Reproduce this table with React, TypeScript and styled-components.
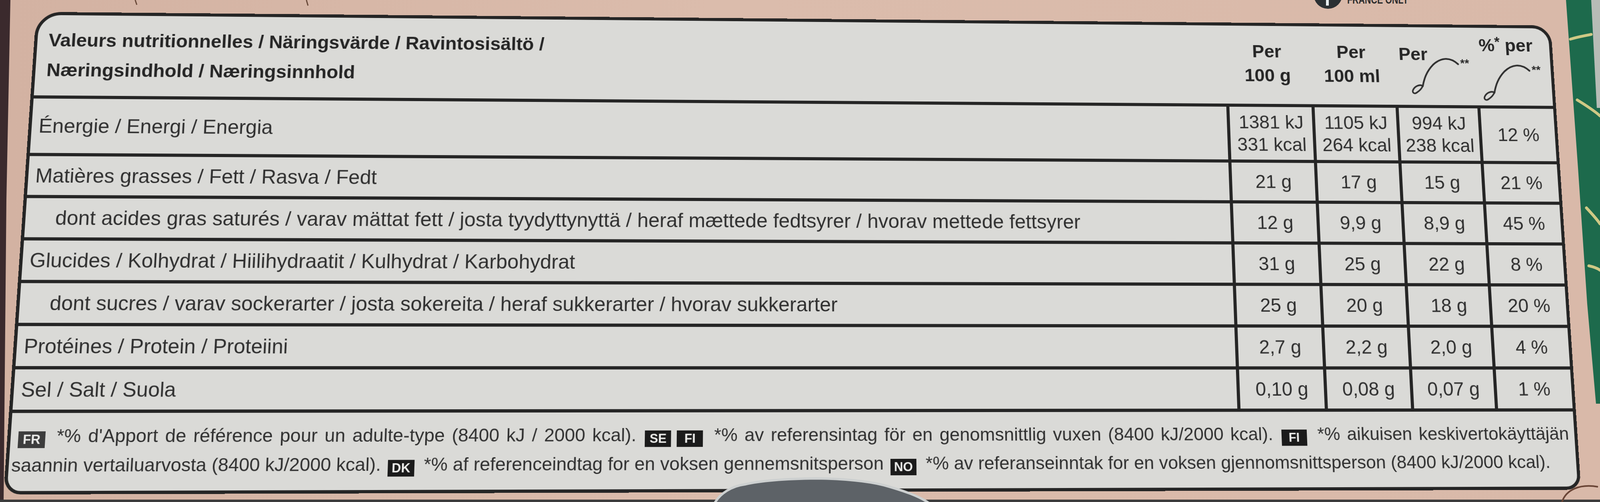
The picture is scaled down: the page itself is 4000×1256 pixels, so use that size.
import React from 'react'
import styled, { createGlobalStyle } from 'styled-components'

const INK = '#303030'
const LINE = '#252525'
const RULE = 8
const COLS = '1fr 221px 219px 214px 199px'

const GlobalStyle = createGlobalStyle`
  html, body { margin: 0; padding: 0; }
  body {
    width: 4000px;
    height: 1256px;
    overflow: hidden;
    background: #d8b8a7;
    font-family: 'Liberation Sans', Arial, sans-serif;
  }
`

type Nutrient = {
  label: string
  indent?: boolean
  values: string[][]
  pct: string
  h: number
}

const ROWS: Nutrient[] = [
  {
    label: 'Énergie / Energi / Energia',
    values: [
      ['1381 kJ', '331 kcal'],
      ['1105 kJ', '264 kcal'],
      ['994 kJ', '238 kcal'],
    ],
    pct: '12 %',
    h: 145,
  },
  { label: 'Matières grasses / Fett / Rasva / Fedt', values: [['21 g'], ['17 g'], ['15 g']], pct: '21 %', h: 105 },
  {
    label:
      'dont acides gras saturés / varav mättat fett / josta tyydyttynyttä / heraf mættede fedtsyrer / hvorav mettede fettsyrer',
    indent: true,
    values: [['12 g'], ['9,9 g'], ['8,9 g']],
    pct: '45 %',
    h: 105,
  },
  {
    label: 'Glucides / Kolhydrat / Hiilihydraatit / Kulhydrat / Karbohydrat',
    values: [['31 g'], ['25 g'], ['22 g']],
    pct: '8 %',
    h: 105,
  },
  {
    label: 'dont sucres / varav sockerarter / josta sokereita / heraf sukkerarter / hvorav sukkerarter',
    indent: true,
    values: [['25 g'], ['20 g'], ['18 g']],
    pct: '20 %',
    h: 105,
  },
  { label: 'Protéines / Protein / Proteiini', values: [['2,7 g'], ['2,2 g'], ['2,0 g']], pct: '4 %', h: 105 },
  { label: 'Sel / Salt / Suola', values: [['0,10 g'], ['0,08 g'], ['0,07 g']], pct: '1 %', h: 105 },
]

const Page = styled.div`
  position: relative;
  width: 4000px;
  height: 1256px;
  overflow: hidden;
  box-sizing: border-box;
  padding: 32px 0 0 88px;
  background: linear-gradient(90deg, #d3b2a2 0%, #dbbcac 45%, #d9b9a9 100%);
`

const BackdropSvg = styled.svg`
  position: absolute;
  left: 0;
  top: 0;
  z-index: 0;
`

const ThumbSvg = styled.svg`
  position: absolute;
  left: 1760px;
  top: 1176px;
  z-index: 2;
`

const Label = styled.section`
  position: relative;
  z-index: 1;
  width: 3864px;
  height: 1190px;
  box-sizing: border-box;
  display: flex;
  flex-direction: column;
  overflow: hidden;
  border: ${RULE}px solid ${LINE};
  border-radius: 62px 50px 36px 40px;
  background: #dadad7;
  color: ${INK};
  transform: perspective(3000px) rotateX(5.9deg) rotateY(1.75deg);
`

const Header = styled.div`
  display: grid;
  grid-template-columns: ${COLS};
  height: 205px;
  flex: none;
`

const Title = styled.h1`
  margin: 0;
  padding: 26px 0 0 27px;
  font-size: 47px;
  line-height: 76px;
  font-weight: 700;
  color: #262626;
`

const HeadText = styled.span`
  font-size: 47px;
  line-height: 63px;
  font-weight: 700;
  color: #262626;
  white-space: nowrap;
`

const PerHead = styled.div`
  display: flex;
  flex-direction: column;
  align-items: center;
  padding-top: 35px;
`

const PortionHead = styled.div`
  display: flex;
  align-items: flex-start;
  padding: 39px 0 0 15px;
`

const PctHead = styled.div`
  display: flex;
  flex-direction: column;
  align-items: flex-start;
  padding: 6px 0 0 13px;
`

const Sup = styled.span`
  font-size: 36px;
  vertical-align: 12px;
`

const SpoonGroup = styled.div<{ $dx: number; $dy: number }>`
  display: flex;
  align-items: flex-start;
  margin-left: ${(p) => p.$dx}px;
  margin-top: ${(p) => p.$dy}px;
`

const Stars = styled.span`
  font-size: 30px;
  line-height: 30px;
  font-weight: 700;
  color: #2a2a2a;
  margin: 2px 0 0 2px;
`

const Row = styled.div<{ $h: number }>`
  display: grid;
  grid-template-columns: ${COLS};
  height: ${(p) => p.$h}px;
  flex: none;
  box-sizing: border-box;
  border-top: ${RULE}px solid ${LINE};
`

const Name = styled.div<{ $indent?: boolean }>`
  display: flex;
  align-items: center;
  padding-left: ${(p) => (p.$indent ? 72 : 17)}px;
  font-size: 50px;
  white-space: nowrap;
`

const Value = styled.div`
  display: flex;
  flex-direction: column;
  align-items: center;
  justify-content: center;
  border-left: ${RULE}px solid ${LINE};
  font-size: 48px;
  line-height: 58px;
  white-space: nowrap;
`

const Footer = styled.footer`
  flex: 1;
  box-sizing: border-box;
  border-top: ${RULE}px solid ${LINE};
  padding: 20px 14px 0 6px;
  font-size: 45px;
  line-height: 70px;
`

const FootLine = styled.div<{ $fill?: boolean }>`
  text-align: left;
  text-align-last: ${(p) => (p.$fill ? 'justify' : 'left')};
  white-space: ${(p) => (p.$fill ? 'normal' : 'nowrap')};
`

const Badge = styled.span<{ $soft?: boolean; $lead?: boolean }>`
  display: inline-block;
  min-width: 64px;
  height: 40px;
  box-sizing: border-box;
  padding: 0 9px;
  margin: 0 10px 0 ${(p) => (p.$lead ? 12 : 4)}px;
  vertical-align: -4px;
  text-align: center;
  text-align-last: center;
  background: ${(p) => (p.$soft ? '#3d3d3d' : '#1b1b1b')};
  color: #ececea;
  font-size: 31px;
  line-height: 40px;
  font-weight: 700;
`

const Spoon: React.FC = () => (
  <svg width={130} height={100} viewBox="0 0 130 100" fill="none" stroke="#2e2e2e" strokeLinecap="round">
    <path d="M30 79 C35 58 42 40 60 22 C80 4 104 -1 126 20" strokeWidth={4.5} />
    <path d="M30 78 C22 73 9 79 4 89 C1 96 7 100 13 96 C21 91 27 85 30 78 Z" strokeWidth={4} />
  </svg>
)

const Backdrop: React.FC = () => (
  <BackdropSvg width={4000} height={1256} viewBox="0 0 4000 1256">
    <polygon points="0,0 26,0 16,500 9,1256 0,1256" fill="#3b2a2d" />
    <polygon points="3915,0 4000,0 4000,1010 3990,1010 3968,760 3945,420" fill="#1d6a4c" />
    <polygon points="3978,0 4000,0 4000,270 3992,270" fill="#b7bcb6" />
    <g stroke="#cfc985" strokeWidth={7} fill="none" strokeLinecap="round">
      <path d="M3926 98 C3945 92 3960 90 3978 86" />
      <path d="M3943 250 C3962 262 3985 276 4000 290" />
      <path d="M3966 520 C3980 535 3992 548 4000 560" />
      <path d="M3972 665 C3985 668 3995 672 4000 676" />
    </g>
    <circle cx={3320} cy={-14} r={36} fill="#2b3033" />
    <rect x={3315} y={0} width={7} height={14} fill="#e8eef0" />
    <text
      x={3368}
      y={9}
      fontFamily="Liberation Sans, sans-serif"
      fontWeight={700}
      fontSize={30}
      fill="#2c2c2c"
      textLength={153}
      lengthAdjust="spacingAndGlyphs"
    >
      FRANCE ONLY
    </text>
    <g stroke="#6a4a3a" strokeWidth={3} fill="none">
      <path d="M338 0 L342 12" />
      <path d="M766 0 L770 14" />
    </g>
    <rect x={0} y={1250} width={4000} height={6} fill="#3c3c3c" />
    <path d="M3905 1256 C3915 1225 3950 1210 3995 1218" stroke="#6a4536" strokeWidth={4} fill="none" />
  </BackdropSvg>
)

const Thumb: React.FC = () => (
  <ThumbSvg width={600} height={80} viewBox="1760 1176 600 80">
    <path
      d="M1786 1260 C1800 1234 1830 1216 1862 1212 C1900 1203 1960 1198 2041 1197 C2120 1198 2170 1204 2210 1214 C2260 1228 2300 1242 2324 1260 Z"
      fill="#5d6267"
      stroke="#cdd0d0"
      strokeWidth={6}
    />
  </ThumbSvg>
)

export default function App() {
  return (
    <>
      <GlobalStyle />
      <Page>
        <Backdrop />
        <Label>
          <Header>
            <Title>
              Valeurs nutritionnelles / Näringsvärde / Ravintosisältö /
              <br />
              Næringsindhold / Næringsinnhold
            </Title>
            <PerHead>
              <HeadText>Per</HeadText>
              <HeadText>100 g</HeadText>
            </PerHead>
            <PerHead>
              <HeadText>Per</HeadText>
              <HeadText>100 ml</HeadText>
            </PerHead>
            <PortionHead>
              <HeadText>Per</HeadText>
              <SpoonGroup $dx={-47} $dy={38}>
                <Spoon />
                <Stars>**</Stars>
              </SpoonGroup>
            </PortionHead>
            <PctHead>
              <HeadText>
                %<Sup>*</Sup> per
              </HeadText>
              <SpoonGroup $dx={4} $dy={16}>
                <Spoon />
                <Stars>**</Stars>
              </SpoonGroup>
            </PctHead>
          </Header>
          {ROWS.map((r) => (
            <Row key={r.label} $h={r.h}>
              <Name $indent={r.indent}>{r.label}</Name>
              {r.values.map((v, i) => (
                <Value key={i}>
                  {v.map((line) => (
                    <span key={line}>{line}</span>
                  ))}
                </Value>
              ))}
              <Value>{r.pct}</Value>
            </Row>
          ))}
          <Footer>
            <FootLine $fill>
              <Badge $soft $lead>
                FR
              </Badge>{' '}
              *% d'Apport de référence pour un adulte-type (8400 kJ / 2000 kcal).{' '}
              <Badge>SE</Badge>
              <Badge>FI</Badge> *% av referensintag för en genomsnittlig vuxen (8400 kJ/2000 kcal).{' '}
              <Badge>FI</Badge> *% aikuisen keskivertokäyttäjän
            </FootLine>
            <FootLine>
              saannin vertailuarvosta (8400 kJ/2000 kcal). <Badge>DK</Badge> *% af referenceindtag for en voksen
              gennemsnitsperson <Badge>NO</Badge> *% av referanseinntak for en voksen gjennomsnittsperson (8400
              kJ/2000 kcal).
            </FootLine>
          </Footer>
        </Label>
        <Thumb />
      </Page>
    </>
  )
}
